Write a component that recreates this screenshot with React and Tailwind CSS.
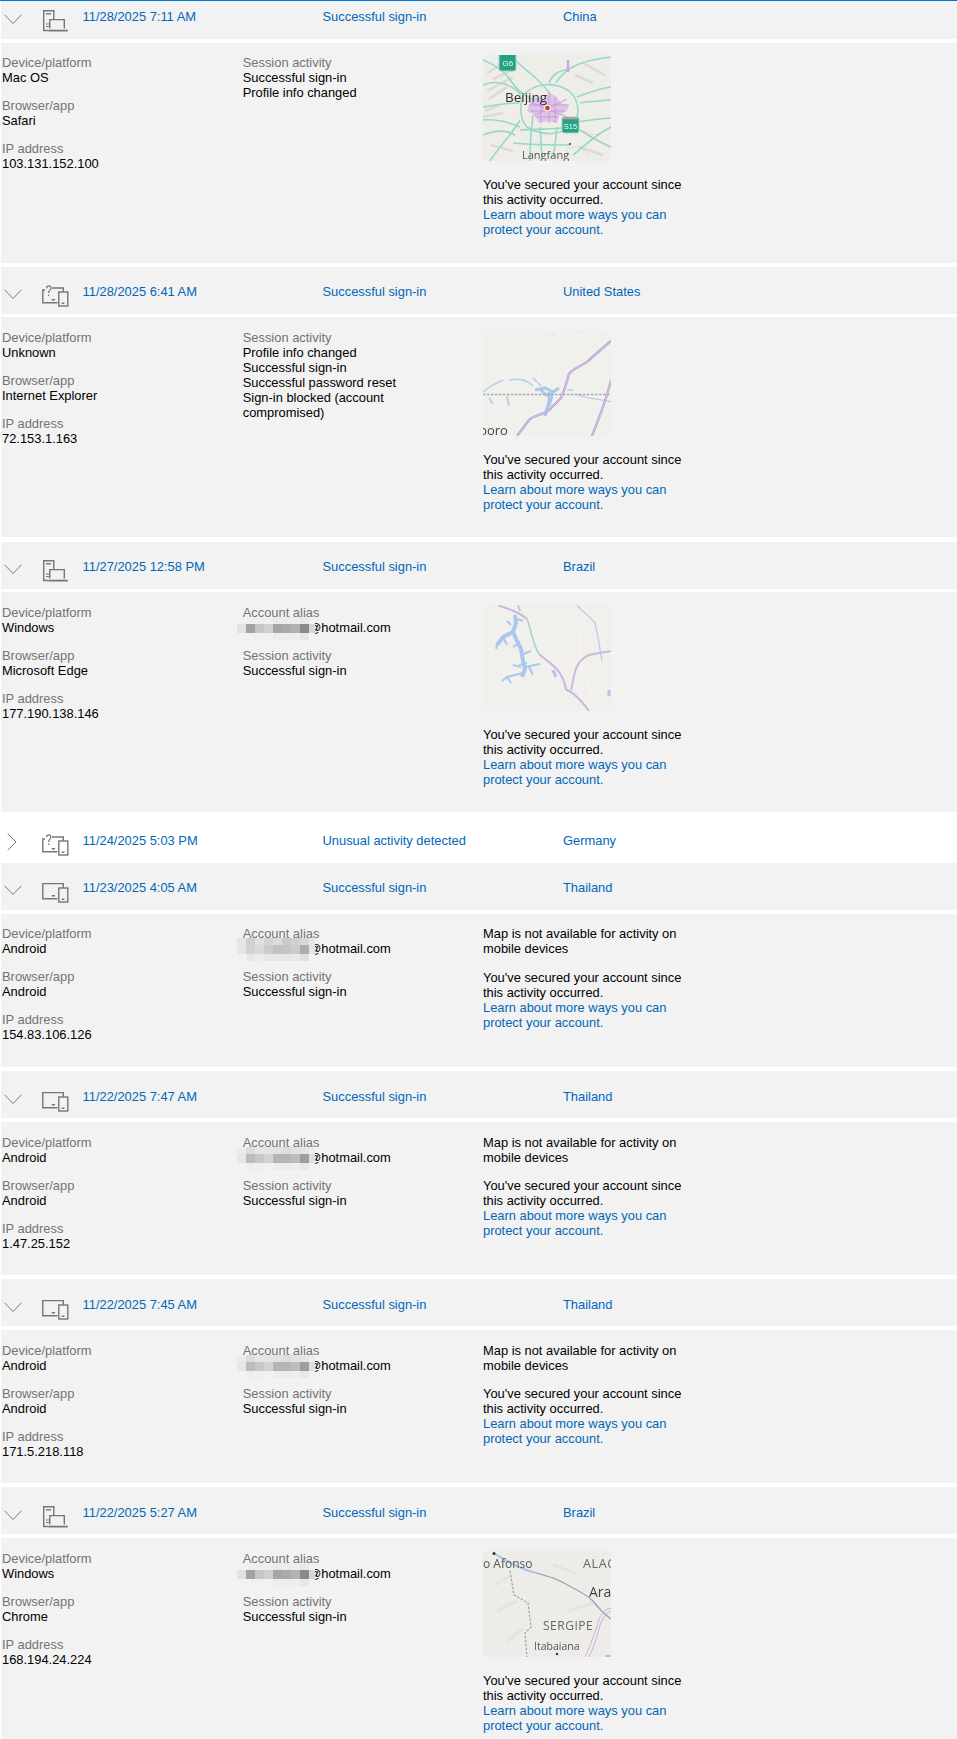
const rows = [
  {
    date: "11/28/2025 7:11 AM", status: "Successful sign-in", place: "China", icon: "desktop", cut: true, high: true,
    device: "Mac OS", browser: "Safari", ip: "103.131.152.100",
    session: ["Successful sign-in", "Profile info changed"], map: "beijing",
  },
  {
    date: "11/28/2025 6:41 AM", status: "Successful sign-in", place: "United States", icon: "unknown", tight: true,
    device: "Unknown", browser: "Internet Explorer", ip: "72.153.1.163",
    session: ["Profile info changed", "Successful sign-in", "Successful password reset", "Sign-in blocked (account compromised)"], map: "border",
  },
  {
    date: "11/27/2025 12:58 PM", status: "Successful sign-in", place: "Brazil", icon: "desktop", tight: true, last: true,
    device: "Windows", browser: "Microsoft Edge", ip: "177.190.138.146", alias: "dark",
    session: ["Successful sign-in"], map: "lake",
  },
  { date: "11/24/2025 5:03 PM", status: "Unusual activity detected", place: "Germany", icon: "unknown", closed: true },
  {
    date: "11/23/2025 4:05 AM", status: "Successful sign-in", place: "Thailand", icon: "mobile", high: true,
    device: "Android", browser: "Android", ip: "154.83.106.126", alias: "light", session: ["Successful sign-in"],
  },
  {
    date: "11/22/2025 7:47 AM", status: "Successful sign-in", place: "Thailand", icon: "mobile", low: true,
    device: "Android", browser: "Android", ip: "1.47.25.152", alias: "mid", session: ["Successful sign-in"],
  },
  {
    date: "11/22/2025 7:45 AM", status: "Successful sign-in", place: "Thailand", icon: "mobile", low: true,
    device: "Android", browser: "Android", ip: "171.5.218.118", alias: "mid", session: ["Successful sign-in"],
  },
  {
    date: "11/22/2025 5:27 AM", status: "Successful sign-in", place: "Brazil", icon: "desktop", low: true,
    device: "Windows", browser: "Chrome", ip: "168.194.24.224", alias: "dark",
    session: ["Successful sign-in"], map: "sergipe",
  },
];

const blur = {
  dark: [
    ["#f1f1f1", "#efefef", "#eeeeee", "#f0f0f0", "#eaeaea", "#ececec", "#eeeeee", "#e8e8e8", "#f0f0f0"],
    ["#e2e2e2", "#a2a2a2", "#c6c6c6", "#d0d0d0", "#a6a6a6", "#aaaaaa", "#b2b2b2", "#8a8a8a", "#d6d6d6"],
    ["#f2f2f2", "#f1f1f1", "#f0f0f0", "#f1f1f1", "#eeeeee", "#eeeeee", "#eeeeee", "#e6e6e6", "#f2f2f2"],
  ],
  light: [
    ["#e6e6e6", "#cfcfcf", "#e0e0e0", "#d4d4d4", "#dcdcdc", "#cacaca", "#d0d0d0", "#d8d8d8", "#e6e6e6"],
    ["#e6e6e6", "#d2d2d2", "#dadada", "#cccccc", "#c2c2c2", "#c4c4c4", "#cccccc", "#adadad", "#e4e4e4"],
    ["#f0f0f0", "#e8e8e8", "#ececec", "#e6e6e6", "#e6e6e6", "#e6e6e6", "#e8e8e8", "#e0e0e0", "#f2f2f2"],
  ],
  mid: [
    ["#ececec", "#dcdcdc", "#e6e6e6", "#e4e4e4", "#e2e2e2", "#dedede", "#e2e2e2", "#e4e4e4", "#ececec"],
    ["#e6e6e6", "#bcbcbc", "#c8c8c8", "#d2d2d2", "#b4b4b4", "#b6b6b6", "#bcbcbc", "#9e9e9e", "#dedede"],
    ["#f2f2f2", "#eeeeee", "#efefef", "#f0f0f0", "#ededed", "#ececec", "#eeeeee", "#e8e8e8", "#f2f2f2"],
  ],
};

function Blur({ kind }) {
  const ys = [0, 7, 16];
  const hs = [7, 9, 7];
  return (
    <svg width="78" height="23" className="absolute left-[-6px] top-[-3px]">
      {blur[kind].map((line, r) =>
        line.map((c, i) => <rect key={i} x={i * 9} y={ys[r]} width={i == 8 ? 6 : 9} height={hs[r]} fill={c} />)
      )}
    </svg>
  );
}

function Chevron({ closed }) {
  if (closed) {
    return (
      <svg width="10" height="18" className="ml-[6px] mt-[17px]" fill="none" stroke="#7a7a7a" strokeWidth="1">
        <path d="M0.7 0.7 L9 9 L0.7 17.3" />
      </svg>
    );
  }
  return (
    <svg width="18" height="11" className="ml-[3px] mt-[22px]" fill="none" stroke="#7a7a7a" strokeWidth="1">
      <path d="M0.5 0.7 L9 9.5 L17.5 0.7" />
    </svg>
  );
}

function DeviceIcon({ type }) {
  if (type == "desktop") {
    return (
      <svg width="27" height="24" className="ml-px mt-[18px]" fill="none" stroke="#767676" strokeWidth="1.4">
        <path d="M5.5 20.5 H0.7 V0.7 H10.8 V9" />
        <path d="M3 3.8 H8" />
        <path d="M3 14 H6.5 M3 16.5 H6" strokeWidth="1" />
        <path d="M6.8 18.5 V9.6 H21.3 V18.5" />
        <path d="M5.5 20.6 H24.8" strokeWidth="1.8" />
      </svg>
    );
  }
  return (
    <svg width="27" height="24" className="mt-[18px]" fill="none" stroke="#767676" strokeWidth="1.4">
      {type == "mobile" ? (
        <path d="M15.5 17.7 H0.8 V2.6 H21.3 V6.8" />
      ) : (
        <>
          <path d="M15.5 17.7 H0.8 V5 H3" />
          <path d="M10 3 H21.3 V6.8" />
          <path d="M4.6 3.2 C4.8 0.3 9 0.2 9 3 C9 5.2 6.6 5.2 6.6 8 M6.6 9.6 V11" strokeWidth="1.2" />
        </>
      )}
      <rect x="16.8" y="7" width="9" height="14" />
      <path d="M9.7 14.7 H13 M19.7 18.3 H22.4" />
    </svg>
  );
}

function BeijingMap() {
  const roads = [
    "M0 5 C12 10 22 16 28 26 S44 42 52 46",
    "M30 2 C36 10 42 14 47 18 S62 32 70 42",
    "M73 28 C80 16 92 6 128 2",
    "M94 42 C104 38 116 34 128 32",
    "M97 48 C108 46 118 46 128 45",
    "M87 68 C100 66 114 64 128 63",
    "M97 75 C108 82 118 88 128 92",
    "M50 62 C48 74 47 92 47 106",
    "M57 72 C58 82 58 92 59 102",
    "M74 72 C73 82 72 92 70 102",
    "M37 65 C30 78 16 92 7 106",
    "M0 52 C12 50 24 48 36 48",
    "M0 65 C14 64 28 68 37 72",
    "M37 75 C54 74 70 74 80 73",
    "M30 88 C50 90 70 90 87 90",
    "M0 80 C10 76 22 74 32 80",
    "M66 28 C70 18 76 16 86 14",
    "M0 30 C14 24 30 30 38 40",
    "M90 100 C100 92 112 80 128 72",
    "M40 40 C36 54 38 66 44 72 C60 82 78 80 90 70 C98 60 96 44 86 36 C72 26 52 28 40 40",
  ];
  return (
    <svg viewBox="0 0 128 106" width="128" height="106" className="block blur-[0.4px]">
      <rect width="128" height="106" fill="#efede7" />
      <path d="M4 36 L30 22 M6 44 L24 32 M10 24 L32 14 M0 62 L20 58 M4 18 L18 10 M2 56 L16 50 M100 8 L122 20 M92 20 L110 28 M96 92 L120 100 M8 90 L30 96" stroke="#dcdad3" strokeWidth="2.5" fill="none" />
      <path d="M92 78 C100 72 108 84 116 78 M84 96 C90 88 100 92 106 100" stroke="#cdbfb0" strokeWidth="0.8" strokeDasharray="1.5 1.5" fill="none" />
      <g fill="none" stroke="#96d8c8" strokeWidth="1.6">
        {roads.map((d, i) => <path key={i} d={d} />)}
      </g>
      <path d="M46 50 L52 42 L60 44 L66 38 L74 42 L78 48 L86 50 L84 56 L76 60 L74 68 L64 66 L56 68 L52 60 L44 56 Z" fill="#dcc5e8" />
      <path d="M46 50 H86 M48 56 H82 M52 62 H76 M58 42 V68 M66 38 V68 M72 42 V68 M44 46 L84 62 M48 62 L84 44" stroke="#c596d8" strokeWidth="0.9" fill="none" />
      <path d="M85 5 V17" stroke="#cfa6dc" strokeWidth="2.5" />
      <circle cx="64.5" cy="53" r="3.6" fill="#f3e9ee" />
      <circle cx="64.5" cy="53" r="2.3" fill="#c23b2e" />
      <text x="22" y="47" fontSize="13.5" fill="#2e2e2e" fontFamily="'Open Sans', sans-serif">Beijing</text>
      <text x="39" y="104" fontSize="11" fill="#555" fontFamily="'Open Sans', sans-serif">Langfang</text>
      <circle cx="87" cy="89" r="1.1" fill="#444" />
      <rect x="16" y="-2" width="17" height="18" rx="2" fill="#25a185" stroke="#9adcca" />
      <text x="19.5" y="11" fontSize="8" fill="#eafff8" fontFamily="'Liberation Sans', sans-serif">G6</text>
      <rect x="79" y="62" width="17" height="16" rx="2" fill="#25a185" stroke="#9adcca" />
      <path d="M80 63.5 H95" stroke="#e98f8f" strokeWidth="1.5" />
      <text x="80.8" y="74" fontSize="7.5" fill="#eafff8" fontFamily="'Liberation Sans', sans-serif">S15</text>
    </svg>
  );
}

function BorderMap() {
  return (
    <svg viewBox="0 0 128 106" width="128" height="106" className="block blur-[0.4px]">
      <rect width="128" height="106" fill="#f0f0ec" />
      <path d="M20 58 C26 48 44 40 58 34 C66 24 72 10 78 4 M58 34 C56 48 50 62 44 74 M80 8 L128 0" stroke="#f5f5f3" strokeWidth="1.2" fill="none" />
      <path d="M68 2 L72 4 L69 6 Z M102 90 L104 96 L102 94 Z" fill="#e8e9d2" />
      <path d="M0 62 L8 56 L20 50 M26 50 C36 48 44 50 50 56 M40 49 L48 54 M50 48 L58 56 M84 60 H90 M94 64 C104 70 116 68 128 72" stroke="#b5cfea" strokeWidth="1.4" fill="none" />
      <path d="M52 60 L62 58 L70 62 L76 58 M66 62 L66 72 L62 86 M58 60 L64 66 M70 62 L66 76" stroke="#a9c8ea" strokeWidth="3" fill="none" />
      <path d="M6 68 L10 74 M24 66 L26 76" stroke="#b9d2ec" strokeWidth="2" />
      <path d="M0 64.5 H128" stroke="#a9a9a6" strokeWidth="1.4" strokeDasharray="2.5 1.5" />
      <g fill="none" stroke="#b9a0d0" strokeWidth="2.4">
        <path d="M34 106 L46 90 C50 85 58 86 66 80 L78 68 C82 60 84 50 86 44 C90 38 100 36 106 30 L128 11" />
        <path d="M109 106 C114 92 122 76 128 50" />
      </g>
      <g fill="none" stroke="#e2d8ea" strokeWidth="0.7">
        <path d="M34 106 L46 90 C50 85 58 86 66 80 L78 68 C82 60 84 50 86 44 C90 38 100 36 106 30 L128 11" />
        <path d="M109 106 C114 92 122 76 128 50" />
      </g>
      <text x="-4" y="105" fontSize="13" fill="#444" fontFamily="'Open Sans', sans-serif">boro</text>
    </svg>
  );
}

function LakeMap() {
  return (
    <svg viewBox="0 0 128 106" width="128" height="106" className="block blur-[0.4px]">
      <rect width="128" height="106" fill="#f1f0ec" />
      <path d="M44 2 L50 4 L47 7 Z M56 2 L62 3 L58 6 Z" fill="#efefd8" />
      <path d="M96 26 C98 50 96 70 110 90" stroke="#f7f7f5" strokeWidth="1.2" fill="none" />
      <g fill="none" stroke="#aac8ee">
        <path d="M32 10 L33 18 L30 27 L34 36 L38 44 L40 56 L42 64 L39 72" strokeWidth="4" />
        <path d="M30 27 L20 32 L14 40" strokeWidth="4" />
        <path d="M34 14 L40 16 M28 20 L24 16 M20 32 L24 40 M36 38 L30 42 M38 50 L48 46 M42 62 L57 59 M40 68 L24 72 L19 76 M46 62 L50 70 M44 58 L36 60 M30 60 L38 62 M14 40 L13 44 M24 72 L28 78" strokeWidth="2" />
        <path d="M35 0 L37 6" strokeWidth="2" />
        <path d="M70 65 L73 72" strokeWidth="3" />
        <path d="M126 85 L126 91" strokeWidth="3" />
      </g>
      <path d="M94 0 C100 8 106 10 112 18 C114 28 116 36 117 44 L119 56" stroke="#b9cfea" strokeWidth="1.3" fill="none" />
      <g fill="none" stroke="#cdb8dc" strokeWidth="2">
        <path d="M15 0 C24 4 36 6 44 14" />
        <path d="M56 49 C64 56 74 62 78 70 C82 76 82 84 84 85 C92 88 100 98 106 106" />
        <path d="M128 46 C118 48 108 48 102 52 C94 58 92 64 90 76 L88 85" />
      </g>
      <path d="M44 14 C48 24 50 40 56 49 M82 80 C82 84 84 86 86 86" stroke="#9ad8c8" strokeWidth="1.5" fill="none" />
    </svg>
  );
}

function SergipeMap() {
  return (
    <svg viewBox="0 0 128 106" width="128" height="106" className="block blur-[0.4px]">
      <rect width="128" height="106" fill="#edece8" />
      <path d="M12 34 L28 24 M14 60 L34 50 M24 90 L40 78 M70 14 L92 22 M84 60 L110 52" stroke="#e4e3dd" strokeWidth="3" fill="none" />
      <path d="M12 3 C24 10 36 18 50 21 C66 26 76 28 88 36 C96 40 104 44 110 50 C116 58 120 62 128 68" stroke="#9aa8b2" strokeWidth="1.3" fill="none" />
      <path d="M12 3 C24 10 36 18 50 21" stroke="#a9c8e8" strokeWidth="2" fill="none" />
      <path d="M27 20 L31 44 L45 52 L48 76 L42 82 L44 106" stroke="#a2a2a2" strokeWidth="1.2" strokeDasharray="2.5 1.5" fill="none" />
      <g fill="none" stroke="#c8a8da" strokeWidth="0.9">
        <path d="M128 57 C120 58 116 66 114 76 C110 86 106 98 102 106" />
        <path d="M128 60 C122 62 118 70 116 78 C114 86 110 98 106 106" />
      </g>
      <path d="M122 104 H128 V106 H122 Z" fill="#a9c8e8" />
      <circle cx="11" cy="2.5" r="1.5" fill="#333" />
      <circle cx="74" cy="103" r="1.2" fill="#333" />
      <text x="0" y="17" fontSize="12" fill="#555" fontFamily="'Open Sans', sans-serif">o Afonso</text>
      <text x="100" y="17" fontSize="12.5" letterSpacing="0.6" fill="#666" fontFamily="'Open Sans', sans-serif">ALAG</text>
      <text x="106" y="46" fontSize="14" fill="#444" fontFamily="'Open Sans', sans-serif">Arap</text>
      <text x="60" y="79" fontSize="12" letterSpacing="0.5" fill="#666" fontFamily="'Open Sans', sans-serif">SERGIPE</text>
      <text x="51" y="99" fontSize="10.5" fill="#555" fontFamily="'Open Sans', sans-serif">Itabaiana</text>
    </svg>
  );
}

const maps = { beijing: BeijingMap, border: BorderMap, lake: LakeMap, sergipe: SergipeMap };

function Field({ label, children, className }) {
  return (
    <div className={className}>
      <div className="text-[#737373]">{label}</div>
      {children}
    </div>
  );
}

function Header({ row }) {
  return (
    <div className={`flex h-[47.33px] text-[#0067b8] ${row.low ? "pt-px" : ""}`}>
      <div className="w-[41px] shrink-0">
        <Chevron closed={row.closed} />
      </div>
      <div className="w-[40.5px] shrink-0">
        <DeviceIcon type={row.icon} />
      </div>
      <div className="w-[240px] shrink-0 pt-[17px]">{row.date}</div>
      <div className="w-[240.5px] shrink-0 pt-[17px]">{row.status}</div>
      <div className="pt-[17px]">{row.place}</div>
    </div>
  );
}

function Detail({ row }) {
  const MapPic = maps[row.map];
  return (
    <div className={`flex pl-px bg-[#f2f2f2] ${row.high ? "pt-[12px]" : "pt-[13px]"} ${row.map ? "h-[220px]" : "h-[153px]"}`}>
      <div className="w-[240.7px] shrink-0">
        <Field label="Device/platform" className="mb-[13px]"><div>{row.device}</div></Field>
        <Field label="Browser/app" className="mb-[13px]"><div>{row.browser}</div></Field>
        <Field label="IP address"><div>{row.ip}</div></Field>
      </div>
      <div className="w-[240.3px] shrink-0">
        {row.alias && (
          <Field label="Account alias" className="mb-[13px]">
            <div className="relative pl-[65.5px]">
              @hotmail.com
              <Blur kind={row.alias} />
            </div>
          </Field>
        )}
        <Field label="Session activity">
          <div className="w-[165px]">
            {row.session.map((s) => <div key={s}>{s}</div>)}
          </div>
        </Field>
      </div>
      <div className="w-[205px] shrink-0">
        {MapPic ? (
          <div className="mb-[16px] h-[106px] w-[128px] overflow-hidden"><MapPic /></div>
        ) : (
          <p className={row.high ? "mb-[14px]" : "mb-[13px]"}>Map is not available for activity on mobile devices</p>
        )}
        <p>You've secured your account since this activity occurred.</p>
        <a className="block text-[#0067b8]">Learn about more ways you can protect your account.</a>
      </div>
    </div>
  );
}

function Row({ row }) {
  if (row.closed) {
    return (
      <div className="mt-[4px] h-[46.67px] overflow-hidden bg-white">
        <Header row={row} />
      </div>
    );
  }
  return (
    <div className={row.tight ? (row.last ? "" : "mb-[5px]") : "mb-[4px]"}>
      {row.cut ? (
        <div className="h-[38.33px] overflow-hidden bg-[#f2f2f2]">
          <div className="-mt-[9px]"><Header row={row} /></div>
        </div>
      ) : (
        <div className="bg-[#f2f2f2]"><Header row={row} /></div>
      )}
      <div className={row.tight ? "mt-[2.67px]" : "mt-[3.67px]"}>
        <Detail row={row} />
      </div>
    </div>
  );
}

export default function App() {
  return (
    <div className="h-[1739px] overflow-hidden bg-white pl-px text-[12.9px] leading-[15px] text-black font-['Liberation_Sans',Arial,sans-serif]">
      <div className="-ml-px h-px bg-[#0078d4]" />
      {rows.map((row) => <Row key={row.date} row={row} />)}
    </div>
  );
}
